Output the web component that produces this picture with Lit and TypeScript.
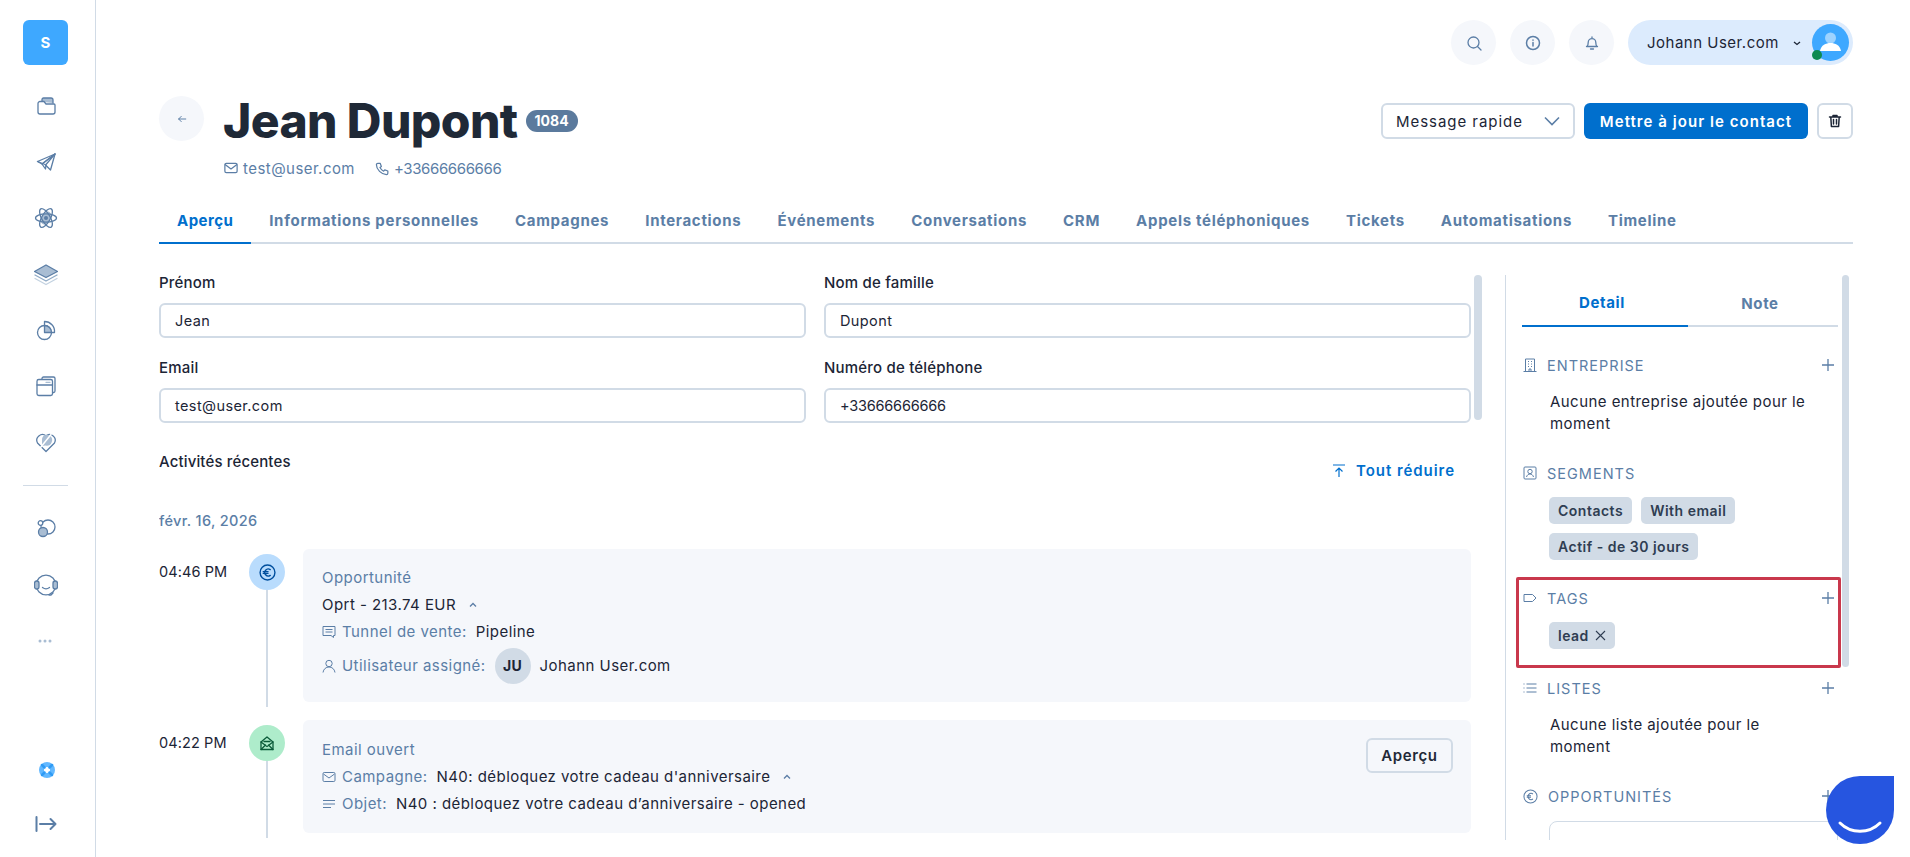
import { LitElement, html, css, svg } from "lit";
import { customElement } from "lit/decorators.js";

const S = "#5b7ea6";
const F = "#a9bdd3";
const ico = (body: unknown, size = 24, vb = 24) =>
  html`<svg width=${size} height=${size} viewBox="0 0 ${vb} ${vb}" fill="none" stroke="currentColor" stroke-width="1.3" stroke-linecap="round" stroke-linejoin="round">${body}</svg>`;

const euro = svg`<circle cx="8" cy="8" r="7"/><path d="M10.600 5.300a3.300 3.300 0 1 0 0 5.400M4 7.200h4.500M4 8.800h4.500"/>`;

const navIcons = [
  svg`<path d="M8 8V5.500A1.500 1.500 0 0 1 9.500 4H17a2 2 0 0 1 2 2v3" fill=${F}/><path d="M4 9.500a2 2 0 0 1 2-2h4l2 2.500h8a1 1 0 0 1 1 1V18a2 2 0 0 1-2 2H6a2 2 0 0 1-2-2z" fill="#fff"/>`,
  svg`<path d="M3.500 11.500 21 4l-4.500 16-5.500-5.500z"/><path d="M21 4 8 14l3.500 5 .5-4.500z"/><path d="M21 4 8 14l-4.500-2.500"/>`,
  svg`<ellipse cx="12" cy="12" rx="7" ry="4" transform="rotate(120 12 12)" fill=${F} stroke="none"/><ellipse cx="12" cy="12" rx="10.500" ry="4.200"/><ellipse cx="12" cy="12" rx="10.500" ry="4.200" transform="rotate(60 12 12)"/><ellipse cx="12" cy="12" rx="10.500" ry="4.200" transform="rotate(120 12 12)"/><circle cx="12" cy="12" r="2" fill=${S} stroke="none"/>`,
  svg`<path d="M12 3 23.500 9.500 12 15.500.500 9.500z" fill=${F} stroke=${S}/><path d="M1 13l11 6 11-6" stroke="#8faac6"/><path d="M1 16.500l11 6 11-6" stroke="#c3d2e1"/>`,
  svg`<circle cx="10.500" cy="14.500" r="7"/><path d="M10.500 7.500V14.500H17.500A7 7 0 0 0 10.500 7.500z" fill=${F}/><path d="M10.500 7.500V3.500A10 10 0 0 1 20.500 14.500H17.500"/>`,
  svg`<path d="M8 5V4.500A1.500 1.500 0 0 1 9.500 3h10A1.500 1.500 0 0 1 21 4.500V17a1.500 1.500 0 0 1-1.500 1.500H18"/><rect x="3" y="5.500" width="15.500" height="16" rx="1.800" fill="#fff"/><path d="M3 11h15.500"/><path d="M12 8.300h4" stroke=${F}/>`,
  svg`<path d="M12 21.500 3.500 13A5.700 5.700 0 0 1 12 5.800 5.700 5.700 0 0 1 20.500 13z"/><path d="M8 10a5 5 0 0 1 8-4.200 5.500 5.500 0 0 1-4.500 9.700L8 16z" fill=${F} stroke="none"/><path d="M6.500 17.500 17 4.500" stroke="#fff" stroke-width="1.500"/>`,
];

const mail = svg`<rect x="2" y="3.500" width="13" height="10" rx="1.500"/><path d="M2.500 5l6 4.500 6-4.500"/>`;
const plus = html`<svg class="plus" width="14" height="14" viewBox="0 0 14 14" fill="none" stroke="currentColor" stroke-width="1.300"><path d="M7 1v12M1 7h12"/></svg>`;

const tabs = ["Aperçu", "Informations personnelles", "Campagnes", "Interactions", "Événements", "Conversations", "CRM", "Appels téléphoniques", "Tickets", "Automatisations", "Timeline"];

@customElement("app-root")
export class AppRoot extends LitElement {
  static styles = css`
    :host { display: block; width: 100%; height: 857px; overflow: hidden; position: relative; background: #fff; color: #1c2536; font-family: "Inter", "Noto Sans", sans-serif; font-size: 15px; }
    * { box-sizing: border-box; }
    .shell { display: grid; grid-template-columns: 96px 1fr; height: 857px; }
    .side { border-right: 1px solid #d1dbe6; display: flex; flex-direction: column; align-items: center; padding: 20px 4px 21px 0; color: #5b7ea6; }
    .side svg { display: block; }
    .logo { width: 45px; height: 45px; border-radius: 6px; background: #3ea8ff; color: #fff; font-weight: 700; font-size: 15px; display: flex; align-items: center; justify-content: center; margin-bottom: 29px; }
    .nav { display: flex; flex-direction: column; gap: 32px; }
    .divider { width: 45px; height: 1px; background: #d1dbe6; margin: 31px 0 31px; flex: none; }
    .dots { color: #a9bdd3; }
    .bottom { margin-top: auto; display: flex; flex-direction: column; gap: 30px; align-items: center; }
    .main { padding: 20px 57px 17px 63px; display: flex; flex-direction: column; min-width: 0; height: 857px; }
    .top { display: flex; justify-content: flex-end; gap: 14px; height: 45px; flex: none; }
    .round { width: 45px; height: 45px; border-radius: 50%; background: #f5f7fb; display: flex; align-items: center; justify-content: center; color: #5b7ea6; }
    .pill { width: 225px; height: 45px; border-radius: 23px; background: #dcebfd; display: flex; align-items: center; padding: 0 4px 0 19px; position: relative; font-size: 15px; color: #1c2536; letter-spacing: .5px; }
    .pill .caret { margin-left: 13px; }
    .avatar { margin-left: auto; width: 37px; height: 37px; border-radius: 50%; background: #3ea8ff; overflow: hidden; }
    .online { position: absolute; left: 184px; bottom: 5px; width: 10px; height: 10px; border-radius: 50%; background: #0e8a50; }
    .head { display: flex; justify-content: space-between; margin-top: 31px; flex: none; }
    .head-left { display: grid; grid-template-columns: 45px auto; column-gap: 19px; }
    .title { display: flex; align-items: center; gap: 8px; height: 45px; padding-top: 4px; }
    h1 { margin: 0; font-size: 48px; font-weight: 800; line-height: 45px; color: #1f2937; letter-spacing: -.6px; }
    .badge { background: #5b7a9d; color: #fff; border-radius: 11px; height: 22px; padding: 0 9px; font-size: 14px; font-weight: 700; display: flex; align-items: center; }
    .meta { grid-column: 2; display: flex; align-items: center; color: #5b7ea6; margin-top: 18px; height: 18px; font-size: 15px; letter-spacing: .45px; }
    .meta svg { margin-right: 4px; }
    .meta span { margin-right: 20px; }
    .meta span.num { letter-spacing: -.38px; }
    .actions { display: flex; gap: 9px; margin-top: 7px; height: 36px; }
    .select { width: 194px; border: 2px solid #d1dbe6; border-radius: 6px; display: flex; align-items: center; justify-content: space-between; padding: 0 13px; font-size: 15px; letter-spacing: .95px; color: #1c2536; }
    .primary { width: 224px; background: #006fcd; color: #fff; border-radius: 6px; font-weight: 600; font-size: 15px; letter-spacing: 1.05px; display: flex; align-items: center; justify-content: center; }
    .trash { width: 36px; border: 2px solid #d1dbe6; border-radius: 6px; display: flex; align-items: center; justify-content: center; color: #1c2536; }
    .tabs { display: flex; margin-top: 23px; border-bottom: 2px solid #d1dbe6; height: 44px; flex: none; }
    .tab { padding: 0 18px 2px; display: flex; align-items: center; margin-bottom: -2px; border-bottom: 2px solid transparent; color: #5b7ea6; font-weight: 700; font-size: 15px; letter-spacing: .7px; white-space: nowrap; }
    .tab.on { color: #006fcd; border-bottom-color: #006fcd; letter-spacing: .45px; }
    .cols { flex: 1; min-height: 0; display: flex; margin-top: 29px; }
    .left { flex: 0 0 1312px; overflow: hidden; padding-top: 2px; }
    .bar { width: 8px; background: #d1dbe6; border-radius: 4px; flex: none; margin-top: 2px; }
    .bar.a { height: 145px; margin-left: 3px; }
    .bar.b { height: 392px; width: 7px; }
    .form { display: grid; grid-template-columns: 647px 647px; column-gap: 18px; row-gap: 22px; }
    label { display: block; font-size: 15px; font-weight: 500; line-height: 18px; margin: -1px 0 11px; letter-spacing: .2px; }
    .input { height: 35px; border: 2px solid #d1dbe6; border-radius: 6px; display: flex; align-items: center; padding-left: 14px; font-size: 14.5px; letter-spacing: .4px; }
    .input.num { letter-spacing: -.2px; }
    .recent { display: flex; justify-content: space-between; margin-top: 30px; height: 27px; padding-right: 16px; }
    .recent b { font-weight: 500; font-size: 15px; line-height: 18px; letter-spacing: .15px; }
    .collapse { color: #006fcd; font-weight: 600; font-size: 15px; line-height: 18px; margin-top: 9px; display: flex; align-items: center; gap: 11px; letter-spacing: .95px; }
    .date { margin-top: 33px; line-height: 16px; font-size: 14.5px; color: #5b7ea6; font-weight: 500; margin-bottom: 20px; letter-spacing: .35px; }
    .row { display: grid; grid-template-columns: 90px 36px 1fr; padding-bottom: 18px; }
    .time { padding-top: 14px; line-height: 18px; font-size: 14.5px; letter-spacing: .1px; }
    .node { display: flex; flex-direction: column; align-items: center; padding-top: 5px; margin-bottom: -5px; }
    .dot { width: 36px; height: 36px; border-radius: 50%; display: flex; align-items: center; justify-content: center; flex: none; }
    .dot.blue { background: #b9dcfd; color: #004f9e; }
    .dot.green { background: #aeeccb; color: #0b5b3a; }
    .line { flex: 1; width: 2px; background: #d1dbe6; }
    .card { margin-left: 18px; background: #f5f7fb; border-radius: 6px; padding: 20px 18px 18px 19px; display: flex; justify-content: space-between; align-items: flex-start; min-width: 0; }
    .card.two { padding: 21px 18px 20px 19px; }
    .lines { display: flex; flex-direction: column; gap: 9px; }
    .ln { display: flex; align-items: center; line-height: 18px; font-size: 15px; letter-spacing: .45px; white-space: nowrap; }
    .muted { color: #5b7ea6; }
    .ln svg.i { margin-right: 6px; color: #5b7ea6; flex: none; }
    .ln .val { margin-left: 9px; }
    .ln .caret { margin-left: 12px; }
    .assign { margin-top: -2px; height: 36px; }
    .ju { width: 36px; height: 36px; border-radius: 50%; background: #d1dbe6; font-weight: 700; font-size: 14px; display: flex; align-items: center; justify-content: center; margin: 0 9px; }
    .ghost { width: 87px; height: 35px; border: 2px solid #d1dbe6; border-radius: 6px; margin-top: -3px; display: flex; align-items: center; justify-content: center; font-weight: 600; font-size: 15px; color: #1f2937; letter-spacing: .6px; }
    .right { flex: 0 0 337px; margin-left: 23px; margin-top: 2px; border-left: 1px solid #d1dbe6; padding-left: 16px; overflow: hidden; }
    .rtabs { display: flex; width: 316px; border-bottom: 2px solid #d1dbe6; height: 52px; margin-bottom: 29px; }
    .rtab { display: flex; align-items: center; justify-content: center; font-weight: 700; font-size: 15px; letter-spacing: .6px; color: #5b7ea6; margin-bottom: -2px; padding: 4px 6px 0 0; }
    .rtab.on { flex: 0 0 166px; color: #006fcd; border-bottom: 2px solid #006fcd; }
    .rtab.off { flex: 1; }
    .sec { width: 316px; position: relative; margin-bottom: 29px; }
    .sh { display: flex; align-items: center; height: 18px; color: #5b7ea6; text-transform: uppercase; font-size: 14.5px; letter-spacing: 1px; padding-right: 3px; }
    .sh svg.i { margin: 0 10px 0 1px; flex: none; }
    .plus { margin-left: auto; }
    .txt { margin: 17px 24px 0 28px; line-height: 22px; font-size: 15px; letter-spacing: .45px; }
    .chips { display: flex; flex-wrap: wrap; gap: 9px; margin: 15px 0 0 27px; }
    .chip { height: 27px; border-radius: 5px; background: #d1dbe6; color: #2f3d52; font-weight: 600; font-size: 14px; padding: 0 9px; display: flex; align-items: center; gap: 6px; letter-spacing: .5px; }
    .sec.tags { margin-bottom: 30px; }
    .sec.tags::after { content: ""; position: absolute; inset: -12px -3px -19px -6px; border: 3px solid #c9384c; border-radius: 2px; pointer-events: none; }
    .box { height: 60px; margin: 16px 0 0 27px; border: 1px solid #d1dbe6; border-radius: 8px; }
    .drop { position: absolute; left: 1826px; top: 776px; width: 68px; height: 68px; background: #2655e0; border-radius: 50% 0 50% 50%; }
    .drop svg { display: block; }
  `;

  render() {
    return html`
      <div class="shell">
        <aside class="side">
          <div class="logo">S</div>
          <div class="nav">${navIcons.map((b) => ico(b))}</div>
          <div class="divider"></div>
          <div class="nav">
            ${ico(svg`<circle cx="14" cy="10" r="7"/><circle cx="6.500" cy="6" r="2.300" fill="#fff"/><circle cx="9" cy="15" r="4.500" fill=${F}/>`)}
            ${ico(svg`<circle cx="12" cy="12" r="9.800"/><rect x="0.500" y="8" width="4.500" height="8" rx="2.200" fill=${F}/><rect x="19" y="8" width="4.500" height="8" rx="2.200" fill=${F}/><path d="M8.500 14.500c2 1.500 5 1.500 7 0M19 20l-2 2h-2"/>`)}
            <span class="dots">${ico(svg`<circle cx="6" cy="12" r="1.500" fill="currentColor" stroke="none"/><circle cx="11" cy="12" r="1.500" fill="currentColor" stroke="none"/><circle cx="16" cy="12" r="1.500" fill="currentColor" stroke="none"/>`)}</span>
          </div>
          <div class="bottom">
            ${ico(svg`<circle cx="13" cy="12" r="8" fill="#62b8ff" stroke="none"/><circle cx="13" cy="12" r="3" fill="#fff" stroke="none"/><path d="M8 7l2.500 2.500M18 7l-2.500 2.500M8 17l2.500-2.500M18 17l-2.500-2.500" stroke="#2f9bf5" stroke-width="2.500"/>`)}
            ${ico(svg`<path d="M2.500 5v14" stroke-width="2"/><path d="M6 12h15.500M16.500 7l5 5-5 5" stroke-width="2"/>`)}
          </div>
        </aside>
        <main class="main">
          <div class="top">
            <div class="round">${ico(svg`<circle cx="7.500" cy="7.500" r="5.500"/><path d="M11.500 11.500 15 15"/>`, 16, 16)}</div>
            <div class="round">${ico(svg`<circle cx="8" cy="8" r="6.500" stroke-width="1.500"/><path d="M8 7.500v3.500M8 5v.3" stroke-width="1.500"/>`, 16, 16)}</div>
            <div class="round">${ico(svg`<path d="M3 11.500c1-1 1.200-2 1.200-4a3.800 3.800 0 0 1 7.600 0c0 2 .2 3 1.200 4zM2.500 11.500h11M6.500 14h3M8 2v1.500"/>`, 16, 16)}</div>
            <div class="pill">
              <span>Johann User.com</span>
              <svg class="caret" width="10" height="10" viewBox="0 0 10 10" fill="none" stroke="#1c2536" stroke-width="1.300"><path d="M2 4l3 2.500L8 4"/></svg>
              <div class="avatar"><svg width="37" height="37" viewBox="0 0 37 37"><circle cx="18.500" cy="14" r="5.500" fill="#9ed3ff"/><path d="M8 27c1-6 6-8 10.500-8S28 21 29 27z" fill="#fff"/></svg></div>
              <div class="online"></div>
            </div>
          </div>
          <div class="head">
            <div class="head-left">
              <div class="round">${ico(svg`<path d="M13 8H3.500M7 4.500 3.500 8 7 11.500"/>`, 12, 16)}</div>
              <div class="title"><h1>Jean Dupont</h1><span class="badge">1084</span></div>
              <div class="meta">
                ${ico(mail, 16, 17)}<span>test@user.com</span>
                ${ico(svg`<path d="M3 2.500h2.500l1.300 3.300-1.500 1.200a8.500 8.500 0 0 0 3.900 3.900l1.200-1.500 3.300 1.300V13c0 .8-.7 1.500-1.500 1.500C6.800 14.500 1.500 9 1.500 4c0-.8.700-1.500 1.500-1.500z"/>`, 15, 16)}<span class="num">+33666666666</span>
              </div>
            </div>
            <div class="actions">
              <div class="select"><span>Message rapide</span><svg width="16" height="10" viewBox="0 0 16 10" fill="none" stroke=${S} stroke-width="1.600"><path d="M1 1.500l7 7 7-7"/></svg></div>
              <div class="primary">Mettre à jour le contact</div>
              <div class="trash">${ico(svg`<path d="M2.500 4h11M6 4V2.500h4V4M3.800 4l.6 9.500h7.200l.6-9.500M6.500 6.500v4.500M9.500 6.500v4.500" stroke-width="1.500"/>`, 16, 16)}</div>
            </div>
          </div>
          <nav class="tabs">${tabs.map((t, i) => html`<div class="tab ${i === 0 ? "on" : ""}">${t}</div>`)}</nav>
          <div class="cols">
            <section class="left">
              <div class="form">
                <div><label>Prénom</label><div class="input">Jean</div></div>
                <div><label>Nom de famille</label><div class="input">Dupont</div></div>
                <div><label>Email</label><div class="input">test@user.com</div></div>
                <div><label>Numéro de téléphone</label><div class="input num">+33666666666</div></div>
              </div>
              <div class="recent">
                <b>Activités récentes</b>
                <div class="collapse"><svg width="12" height="14" viewBox="0 0 12 14" fill="none" stroke="currentColor" stroke-width="1.200"><path d="M0 1h12M6 13V4M2.500 7.500 6 4l3.500 3.500"/></svg>Tout réduire</div>
              </div>
              <div class="date">févr. 16, 2026</div>
              <div class="row">
                <div class="time">04:46 PM</div>
                <div class="node">
                  <div class="dot blue">${ico(euro, 17, 16)}</div>
                  <div class="line"></div>
                </div>
                <div class="card">
                  <div class="lines">
                    <div class="ln muted">Opportunité</div>
                    <div class="ln">Oprt - 213.74 EUR
                      <svg class="caret" width="10" height="10" viewBox="0 0 10 10" fill="none" stroke=${S} stroke-width="1.300"><path d="M2 6.500 5 3.500l3 3"/></svg></div>
                    <div class="ln"><svg class="i" width="14" height="14" viewBox="0 0 14 14" fill="none" stroke="currentColor" stroke-width="1"><path d="M1 1.500h12v9h-1.500v2L9 10.500H1zM3.500 4.500h7M3.500 7h7"/></svg><span class="muted">Tunnel de vente:</span><span class="val">Pipeline</span></div>
                    <div class="ln assign"><svg class="i" width="14" height="14" viewBox="0 0 14 14" fill="none" stroke="currentColor" stroke-width="1"><circle cx="7" cy="4.500" r="3.200"/><path d="M1 13.500c.5-3.500 3-5.500 6-5.500s5.500 2 6 5.500"/></svg><span class="muted">Utilisateur assigné:</span><div class="ju">JU</div>Johann User.com</div>
                  </div>
                </div>
              </div>
              <div class="row">
                <div class="time">04:22 PM</div>
                <div class="node">
                  <div class="dot green">${ico(svg`<path d="M2 7 8 2l6 5v7.500H2z"/><path d="M2 7l6 4.500L14 7M2 14.500 6.500 10M14 14.500 9.500 10M5 6.500h6"/>`, 16, 16)}</div>
                  <div class="line"></div>
                </div>
                <div class="card two">
                  <div class="lines">
                    <div class="ln muted">Email ouvert</div>
                    <div class="ln"><svg class="i" width="14" height="14" viewBox="0 0 14 14" fill="none" stroke="currentColor" stroke-width="1"><rect x="1" y="2.500" width="12" height="9" rx="1.200"/><path d="M1.500 4 7 8l5.500-4"/></svg><span class="muted">Campagne:</span><span class="val">N40: débloquez votre cadeau d'anniversaire</span>
                      <svg class="caret" width="10" height="10" viewBox="0 0 10 10" fill="none" stroke=${S} stroke-width="1.300"><path d="M2 6.500 5 3.500l3 3"/></svg></div>
                    <div class="ln"><svg class="i" width="14" height="14" viewBox="0 0 14 14" fill="none" stroke="currentColor" stroke-width="1"><path d="M1 3.500h12M1 7h12M1 10.500h8"/></svg><span class="muted">Objet:</span><span class="val">N40 : débloquez votre cadeau d’anniversaire - opened</span></div>
                  </div>
                  <div class="ghost">Aperçu</div>
                </div>
              </div>
            </section>
            <div class="bar a"></div>
            <aside class="right">
              <div class="rtabs"><div class="rtab on">Detail</div><div class="rtab off">Note</div></div>
              <div class="sec">
                <div class="sh"><svg class="i" width="14" height="14" viewBox="0 0 14 14" fill="none" stroke="currentColor" stroke-width="1"><path d="M.5 13.500h13M2.500 13.500V1h9v12.500M5 3.500h1M8 3.500h1M5 6h1M8 6h1M5 8.500h1M8 8.500h1M6 13.500v-2.500h2v2.500"/></svg>Entreprise${plus}</div>
                <div class="txt">Aucune entreprise ajoutée pour le moment</div>
              </div>
              <div class="sec">
                <div class="sh"><svg class="i" width="14" height="14" viewBox="0 0 14 14" fill="none" stroke="currentColor" stroke-width="1"><rect x="1" y="1" width="12" height="12" rx="1"/><circle cx="7" cy="5.500" r="2.200"/><path d="M3.500 11c.5-2 2-3 3.500-3s3 1 3.500 3"/></svg>Segments</div>
                <div class="chips"><div class="chip">Contacts</div><div class="chip">With email</div><div class="chip">Actif - de 30 jours</div></div>
              </div>
              <div class="sec tags">
                <div class="sh"><svg class="i" width="14" height="14" viewBox="0 0 14 14" fill="none" stroke="currentColor" stroke-width="1"><path d="M1 3.500h8.500L13 7l-3.500 3.500H1z" stroke-linejoin="round"/></svg>Tags${plus}</div>
                <div class="chips"><div class="chip">lead <svg width="11" height="11" viewBox="0 0 11 11" fill="none" stroke="currentColor" stroke-width="1.100"><path d="M1 1l9 9M10 1l-9 9"/></svg></div></div>
              </div>
              <div class="sec">
                <div class="sh"><svg class="i" width="14" height="14" viewBox="0 0 14 14" fill="none" stroke="currentColor" stroke-width="1"><path d="M3.500 3h10M3.500 7h10M3.500 11h10M.5 3h1M.5 7h1M.5 11h1"/></svg>Listes${plus}</div>
                <div class="txt">Aucune liste ajoutée pour le moment</div>
              </div>
              <div class="sec">
                <div class="sh"><svg class="i" width="15" height="15" viewBox="0 0 16 16" fill="none" stroke="currentColor" stroke-width="1.100">${euro}</svg>Opportunités${plus}</div>
                <div class="box"></div>
              </div>
            </aside>
            <div class="bar b"></div>
          </div>
        </main>
      </div>
      <div class="drop"><svg width="68" height="68" viewBox="0 0 68 68" fill="none" stroke="#fff" stroke-width="3" stroke-linecap="round"><path d="M14 47c11 11 29 11 40 0"/></svg></div>
    `;
  }
}
